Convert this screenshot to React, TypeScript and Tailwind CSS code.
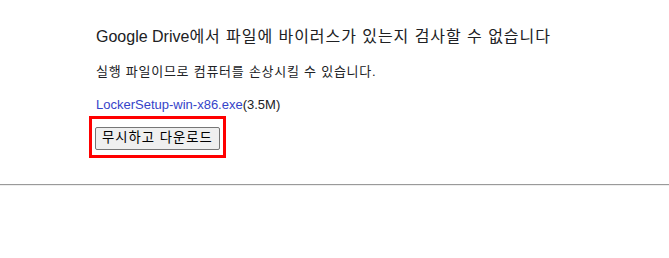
export default function App() {
  const font = { fontFamily: 'Arial, "Liberation Sans", "Noto Sans CJK KR", sans-serif' };
  return (
    <div className="w-[669px] h-[258px] bg-white text-[#202124]" style={font}>
      <div className="pl-[96px] pt-[27px]">
        <div className="text-[16px] leading-[20px] text-[#202124] whitespace-nowrap">
          Google Drive<span className="tracking-[0.95px]">에서 파일에 바이러스가 있는지 검사할 수 없습니다</span>
        </div>
        <div className="mt-[17px] text-[13px] leading-[16px] tracking-[0.75px] whitespace-nowrap">실행 파일이므로 컴퓨터를 손상시킬 수 있습니다.</div>
        <div className="mt-[17px] text-[13px] leading-[16px]">
          <a className="text-[#3543c9]">LockerSetup-win-x86.exe</a>
          <span>(3.5M)</span>
        </div>
        <div className="mt-[3px] -ml-[7px] w-fit border-[3px] border-[#ff0000] px-[3px] pt-[6px] pb-[5px]">
          <button className="h-[23px] px-[6px] bg-[#efefef] border border-[#767676] rounded-[2px] text-[13.33px] leading-[16px] text-black tracking-[1px] whitespace-nowrap">무시하고 다운로드</button>
        </div>
      </div>
      <div className="mt-[26px] border-t border-t-[#9a9a9a] border-b border-b-[#eeeeee]" />
    </div>
  );
}
